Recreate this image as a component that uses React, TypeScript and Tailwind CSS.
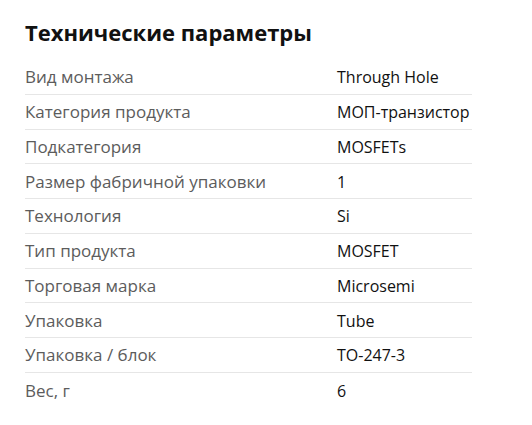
const specs: [string, string][] = [
  ['Вид монтажа', 'Through Hole'],
  ['Категория продукта', 'МОП-транзистор'],
  ['Подкатегория', 'MOSFETs'],
  ['Размер фабричной упаковки', '1'],
  ['Технология', 'Si'],
  ['Тип продукта', 'MOSFET'],
  ['Торговая марка', 'Microsemi'],
  ['Упаковка', 'Tube'],
  ['Упаковка / блок', 'TO-247-3'],
  ['Вес, г', '6'],
];

export default function App() {
  return (
    <div className="min-h-screen bg-white pl-[25px] pt-[17px] font-['Open_Sans',sans-serif]">
      <h2 className="text-[22px] font-bold leading-[30px] text-[#111]">Технические параметры</h2>
      <div className="mt-[13px] w-[447px]">
        {specs.map(([label, value], i) => (
          <div
            key={label}
            className={`grid h-[34.75px] grid-cols-[312px_1fr] items-center pt-[1px] leading-[24px] ${
              i < specs.length - 1 ? 'border-b border-[#e6e6e6]' : ''
            }`}
          >
            <span className="text-[17px] text-[#5c5c5c]">{label}</span>
            <span className="whitespace-nowrap text-[16px] text-[#111]">{value}</span>
          </div>
        ))}
      </div>
    </div>
  );
}
